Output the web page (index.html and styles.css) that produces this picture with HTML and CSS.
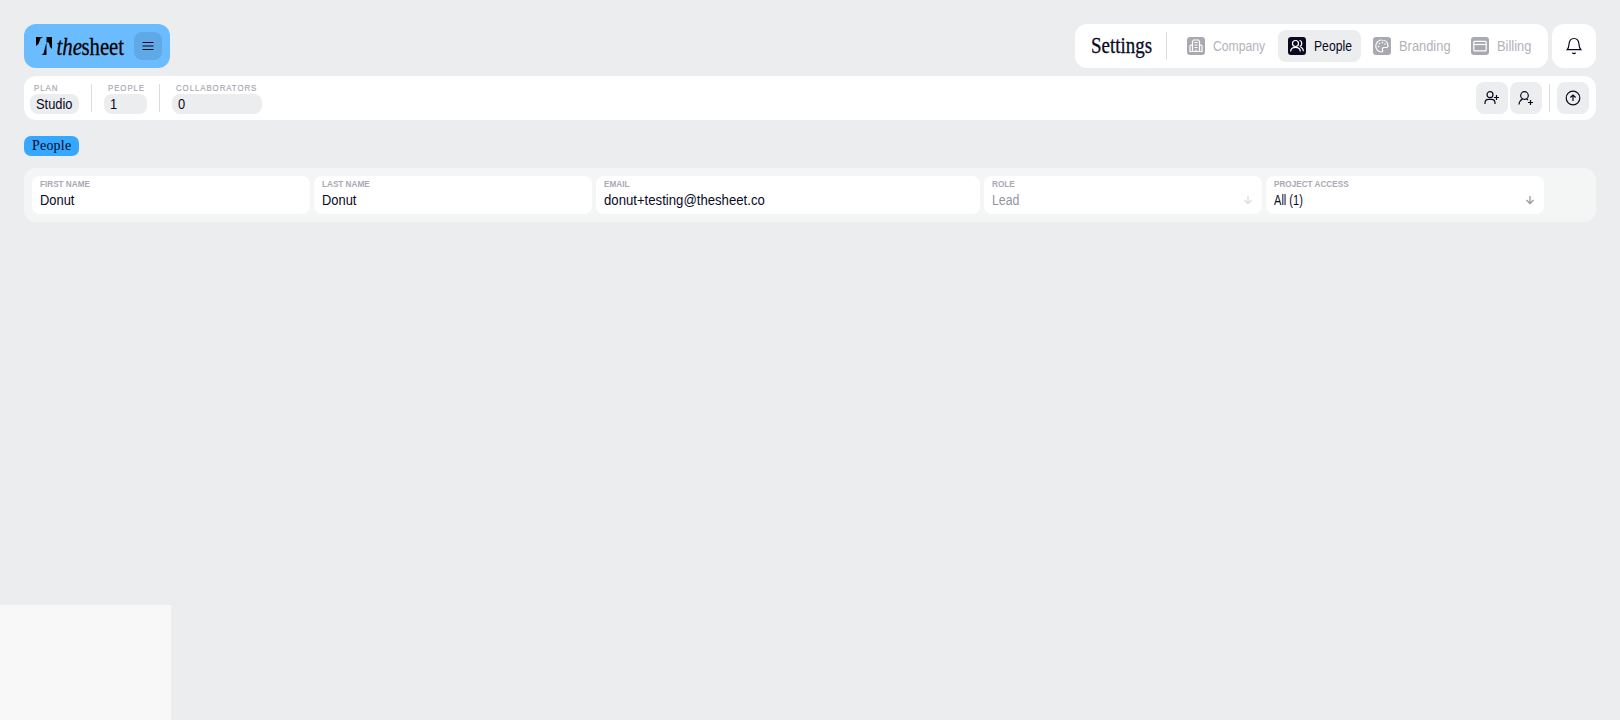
FILE: index.html
```
<!DOCTYPE html>
<html lang="en">
<head>
    <meta charset="UTF-8">
    <meta name="viewport" content="width=device-width, initial-scale=1.0">
    <title>People - thesheet</title>
    <link rel="stylesheet" href="styles.css">
</head>
<body>

    <header class="header">
        <div class="logo">
            <svg class="logo-svg" width="98" height="28" viewBox="0 0 98 28">
                <path d="M0 5h7L4.500 6.500 2.500 12 0 14zM10.500 5H16v12l-2-2-1-4-2.500-1zM10.500 10v13H5.500l2-1.500z"/>
                <text class="logo-the" x="20.500" y="22.500" textLength="25.500" lengthAdjust="spacingAndGlyphs">the</text>
                <text class="logo-sheet" x="45.500" y="22.500" textLength="42.500" lengthAdjust="spacingAndGlyphs">sheet</text>
            </svg>
            <button class="menu-btn" aria-label="Menu">
                <svg width="12" height="10" viewBox="0 0 12 10"><path d="M.5 1.500h11M.5 5h11M.5 8.500h11"/></svg>
            </button>
        </div>

        <div class="header-right">
            <nav class="nav">
                <svg class="nav-title" width="62" height="30" viewBox="0 0 62 30"><text x="0" y="22" textLength="61" lengthAdjust="spacingAndGlyphs">Settings</text></svg>
                <span class="divider"></span>
                <a class="nav-item company">
                    <svg class="nav-icon" viewBox="0 0 18 18"><path d="M5.500 14.500V4.500l1-1.500h5l1 1.500v10M5.500 8H4L3 9v5.500h12V9l-1-1h-1.500M7.500 5.500h3M7.500 8h3M7.500 10.500h3M9 12.500v2"/></svg>
                    <span>Company</span>
                </a>
                <a class="nav-item people active">
                    <svg class="nav-icon" viewBox="0 0 18 18"><circle cx="7.500" cy="6.500" r="3"/><path d="M2.700 14.500c0-2.700 2-4.200 4.800-4.200s4.800 1.500 4.800 4.200M11.500 3.500c2.800.2 3 5 .2 5.800M12.500 10.300c1.800.3 2.800 1.800 2.800 4"/></svg>
                    <span>People</span>
                </a>
                <a class="nav-item branding">
                    <svg class="nav-icon" viewBox="0 0 18 18"><path d="M9 3a6 6 0 0 0-.5 12c1.500 0 1.500-1.200 1-2.200-.5-1.300.3-2.300 1.500-2.300h2.300c1.200 0 1.800-.8 1.700-2C14.700 5.300 12.200 3 9 3z"/><path d="M5.500 9.500v.1M6.500 6.500v.1M9.500 5.500v.1M12 7v.1" class="dots"/></svg>
                    <span>Branding</span>
                </a>
                <a class="nav-item billing">
                    <svg class="nav-icon" viewBox="0 0 18 18"><rect x="2.800" y="4.300" width="12.400" height="9.600" rx="1"/><path d="M3 7.500h12"/></svg>
                    <span>Billing</span>
                </a>
            </nav>
            <button class="bell" aria-label="Notifications">
                <svg width="16" height="18" viewBox="0 0 16 18"><path d="M1.200 12.700h13.600c-1.300-1.200-1.600-3-1.800-5.500C12.700 3.500 11 1.500 8 1.500S3.300 3.500 3 7.200c-.2 2.500-.5 4.300-1.800 5.500zM6.300 15.800c.8.700 2.600.7 3.400 0"/></svg>
            </button>
        </div>
    </header>

    <section class="toolbar">
        <div class="stat plan"><label>PLAN</label><div class="pill"><span>Studio</span></div></div>
        <span class="divider"></span>
        <div class="stat members"><label>PEOPLE</label><div class="pill"><span>1</span></div></div>
        <span class="divider"></span>
        <div class="stat collab"><label>COLLABORATORS</label><div class="pill"><span>0</span></div></div>

        <div class="actions">
            <button class="action" aria-label="Add person">
                <svg width="18" height="18" viewBox="0 0 18 18"><circle cx="7" cy="5.700" r="3"/><path d="M2 15v-1c0-2.200 1.500-3.700 3.500-3.700h3c2 0 3.500 1.500 3.500 3.700v1M13.500 6v5M11 8.500h5"/></svg>
            </button>
            <button class="action" aria-label="Add collaborator">
                <svg width="18" height="18" viewBox="0 0 18 18"><circle cx="7.500" cy="6.500" r="3.800"/><path d="M2 15.500c.2-3 1.600-4.500 3.600-5.800M9.400 9.700l1.600 1.300M13.500 11v5M11 13.500h5"/></svg>
            </button>
            <span class="divider"></span>
            <button class="action" aria-label="Upload">
                <svg width="18" height="18" viewBox="0 0 18 18"><circle cx="9" cy="9" r="6.800"/><path d="M9 12V6.200M6.400 8.500 9 6l2.600 2.500"/></svg>
            </button>
        </div>
    </section>

    <h2 class="tag">People</h2>

    <div class="row">
        <div class="field"><label>FIRST NAME</label><span>Donut</span></div>
        <div class="field"><label>LAST NAME</label><span>Donut</span></div>
        <div class="field"><label>EMAIL</label><span class="email">donut+testing@thesheet.co</span></div>
        <div class="field disabled">
            <label>ROLE</label><span>Lead</span>
            <svg class="arrow" viewBox="0 0 10 10"><path d="M5 1v7.500M1.500 5 5 8.500 8.500 5"/></svg>
        </div>
        <div class="field">
            <label>PROJECT ACCESS</label><span class="access">All (1)</span>
            <svg class="arrow" viewBox="0 0 10 10"><path d="M5 1v7.500M1.500 5 5 8.500 8.500 5"/></svg>
        </div>
    </div>

    <div class="status-panel"></div>

</body>
</html>
```
FILE: styles.css
```
* {
    box-sizing: border-box;
}
body {
    margin: 0;
    padding: 24px;
    height: 720px;
    overflow: hidden;
    background: #ecedef;
    color: #09091f;
    font-family: "Liberation Sans", Arial, sans-serif;
    font-size: 14px;
    line-height: 16px;
}
button {
    display: flex;
    align-items: center;
    justify-content: center;
    border: none;
    padding: 0;
    cursor: pointer;
}
svg {
    fill: none;
    stroke: #09091f;
    stroke-width: 1.2;
    flex: none;
    overflow: visible;
}
.header,
.header-right,
.nav,
.logo,
.toolbar,
.actions {
    display: flex;
    align-items: center;
}
.header {
    justify-content: space-between;
    height: 44px;
}
.logo {
    width: 146px;
    height: 44px;
    padding-left: 12px;
    border-radius: 12px;
    background: #6abcff;
}
.logo-svg {
    fill: #000;
    stroke: none;
}
.logo-svg text {
    font-family: "Liberation Serif", serif;
    font-size: 25px;
    stroke: #000;
    stroke-width: 0.3;
}
.logo-the {
    font-style: italic;
}
.menu-btn {
    width: 28px;
    height: 28px;
    border-radius: 8px;
    background: #5fa9e6;
}
.header-right {
    gap: 4px;
}
.nav {
    width: 473px;
    height: 44px;
    padding-left: 16px;
    border-radius: 12px;
    background: #fff;
    gap: 2px;
}
.nav-title {
    fill: #09091f;
    font-family: "Liberation Serif", serif;
    font-size: 22.5px;
    stroke-width: 0.3;
}
.divider {
    width: 1px;
    height: 28px;
    background: #dcdce0;
}
.nav .divider {
    margin: 0 8px 0 11px;
}
.nav-item {
    display: flex;
    align-items: center;
    gap: 8px;
    height: 32px;
    padding-left: 10px;
    border-radius: 8px;
    color: #b2b2ba;
}
/* condensed text */
.nav-item span,
.pill span,
.stat label,
.field label,
.field span {
    transform: scaleX(0.92);
    transform-origin: left;
    white-space: nowrap;
}
.company {
    width: 99px;
}
.people {
    width: 83px;
}
.branding {
    width: 96px;
}
.billing {
    width: 79px;
}
.nav .company span,
.nav .people span {
    transform: scaleX(0.87);
}
.nav-icon {
    width: 18px;
    height: 18px;
    border-radius: 3px;
    background: #a9a9b2;
    stroke: #fff;
}
.dots {
    stroke-width: 1.6;
    stroke-linecap: round;
}
.active {
    background: #ecedef;
    color: #09091f;
}
.active .nav-icon {
    background: #09091f;
}
.bell {
    width: 44px;
    height: 44px;
    border-radius: 12px;
    background: #fff;
}
.toolbar {
    height: 44px;
    margin-top: 8px;
    padding: 0 7px 0 6px;
    border-radius: 12px;
    background: #fff;
}
.stat label {
    display: block;
    height: 12px;
    margin-left: 4px;
    color: #a9a9b2;
    font-size: 9.5px;
    line-height: 12px;
    letter-spacing: 1.1px;
    transform: scaleX(0.83);
    -webkit-text-stroke: 0.2px #a9a9b2;
}
.pill {
    height: 20px;
    padding-left: 6px;
    border-radius: 8px;
    background: #ecedef;
    line-height: 20px;
}
.pill span {
    display: block;
}
.plan {
    width: 49px;
}
.members {
    width: 43px;
}
.collab {
    width: 90px;
}
.toolbar > .divider {
    margin: 0 12px;
}
.actions {
    margin-left: auto;
    gap: 2px;
}
.action {
    width: 32px;
    height: 32px;
    border-radius: 8px;
    background: #ecedef;
}
.actions .divider {
    margin: 0 5px;
}
.tag {
    width: 55px;
    height: 20px;
    margin: 16px 0 12px;
    padding-left: 8px;
    border-radius: 7px;
    background: #34a7ff;
    font: 14px/19px "Liberation Serif", serif;
    letter-spacing: 0.2px;
}
.row {
    display: grid;
    grid-template-columns: 278px 278px 384px 278px 278px;
    gap: 4px;
    padding: 8px;
    border-radius: 12px;
    background: #f4f6f6;
}
.field {
    display: grid;
    grid-template-columns: 1fr 10px;
    grid-template-rows: 16px 18px;
    height: 38px;
    padding: 0 9px 0 8px;
    border-radius: 8px;
    background: #fff;
}
.field label {
    grid-column: 1 / 3;
    color: #a9a9b2;
    font-size: 9.5px;
    font-weight: bold;
    transform: scaleX(0.86);
}
.field span {
    line-height: 17px;
}
.field .email {
    transform: scaleX(0.94);
}
.field .access {
    transform: scaleX(0.79);
}
.arrow {
    width: 10px;
    height: 10px;
    margin-top: 3px;
    stroke: #9a9aa5;
    stroke-width: 1.3;
}
.field.disabled span {
    color: #9494a0;
    transform: scaleX(0.88);
}
.disabled .arrow {
    stroke: #dedee2;
}
/* status area over the page corner */
.status-panel {
    position: absolute;
    left: 0;
    bottom: 0;
    width: 171px;
    height: 115px;
    background: #f8f8f8;
}
```
